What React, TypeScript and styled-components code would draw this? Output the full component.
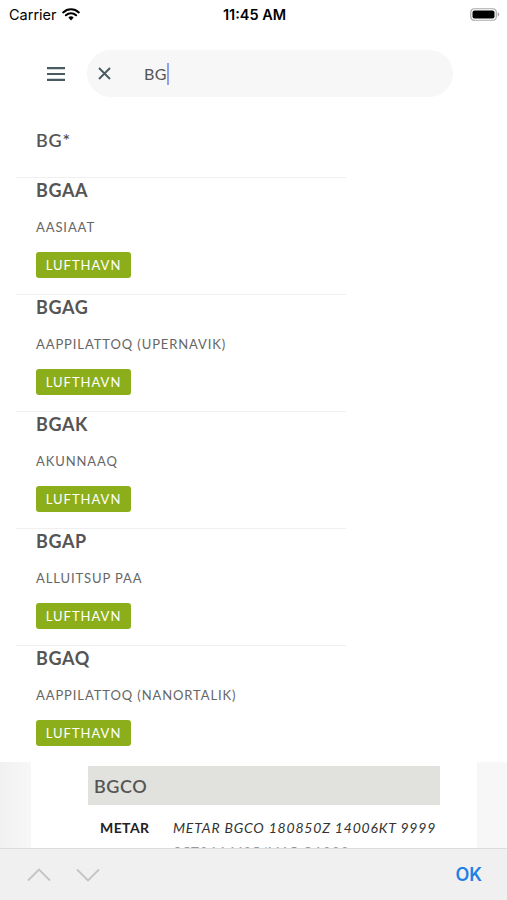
import React from "react";
import styled, { createGlobalStyle } from "styled-components";

const Global = createGlobalStyle`
  html, body { margin: 0; padding: 0; background: #fff; }
  body { font-family: Lato, "Open Sans", sans-serif; }
  * { box-sizing: border-box; }
`;

const Page = styled.div`
  width: 507px;
  height: 900px;
  overflow: hidden;
  display: flex;
  flex-direction: column;
  background: #fff;
`;

const StatusBar = styled.div`
  height: 28px;
  display: grid;
  grid-template-columns: 1fr auto 1fr;
  align-items: center;
  padding: 0 7px 0 9px;
  font-family: Inter, "Liberation Sans", sans-serif;
  color: #000;
`;

const Carrier = styled.div`
  display: flex;
  align-items: center;
  gap: 5px;
  font-size: 14.5px;
`;

const Time = styled.div`
  font-size: 14.5px;
  font-weight: 600;
`;

const BatteryWrap = styled.div`
  justify-self: end;
  display: flex;
  align-items: center;
`;

const Header = styled.div`
  height: 90px;
  display: flex;
  align-items: flex-start;
  padding: 22px 0 0 47px;
  gap: 22px;
`;

const MenuButton = styled.div`
  width: 18px;
  height: 47px;
  display: flex;
  align-items: center;
`;

const SearchPill = styled.div`
  width: 366px;
  height: 47px;
  border-radius: 24px;
  background: #f7f7f7;
  display: flex;
  align-items: center;
  padding-left: 11px;
`;

const SearchText = styled.div`
  margin-left: 33px;
  font-size: 16px;
  letter-spacing: 0.3px;
  color: #555;
  display: flex;
  align-items: center;
`;

const Caret = styled.span`
  display: inline-block;
  width: 2px;
  height: 22px;
  background: #8aa2f0;
`;

const List = styled.div`
  width: 330px;
  margin-left: 16px;
`;

const QueryRow = styled.div`
  height: 59px;
  padding: 10px 0 0 20px;
  font-size: 18px;
  line-height: 24px;
  font-weight: 600;
  letter-spacing: 0.8px;
  color: #555;
`;

const Item = styled.div`
  height: 117px;
  border-top: 1px solid #efefef;
  padding-left: 20px;
  display: flex;
  flex-direction: column;
  align-items: flex-start;
`;

const Code = styled.div`
  font-size: 18px;
  line-height: 24px;
  font-weight: 700;
  letter-spacing: 0.6px;
  color: #555;
`;

const Name = styled.div`
  margin-top: 15px;
  font-size: 13px;
  line-height: 20px;
  letter-spacing: 0.9px;
  color: #666;
`;

const Badge = styled.div`
  margin-top: 15px;
  height: 26px;
  width: 95px;
  border-radius: 3px;
  background: #8cae1a;
  color: #fff;
  font-size: 13px;
  display: flex;
  align-items: center;
  justify-content: center;
  letter-spacing: 1px;
`;

const Behind = styled.div`
  flex: 1;
  background: linear-gradient(90deg, #f1f1f1 0px, #f7f7f7 31px, #f7f7f7 100%);
  overflow: hidden;
  display: flex;
`;

const Card = styled.div`
  margin-left: 31px;
  width: 446px;
  background: #fff;
  padding: 4px 37px 0 57px;
`;

const Panel = styled.div`
  width: 352px;
  overflow: hidden;
`;

const PanelHeader = styled.div`
  height: 39px;
  background: #e1e1dd;
  display: flex;
  align-items: center;
  padding-left: 6px;
  font-size: 18px;
  font-weight: 600;
  letter-spacing: 0.6px;
  color: #555;
`;

const DataRow = styled.div`
  display: flex;
  padding: 13px 0 0 12px;
  white-space: nowrap;
`;

const DataLabel = styled.div`
  width: 73px;
  flex-shrink: 0;
  font-size: 14px;
  font-weight: 700;
  letter-spacing: 0.4px;
  line-height: 20px;
  color: #222;
`;

const DataValue = styled.div`
  font-size: 14px;
  font-style: italic;
  letter-spacing: 0.8px;
  color: #333;
  line-height: 20px;
`;

const ValueLine = styled.div<{ $faded?: boolean }>`
  margin-top: ${(p) => (p.$faded ? "4px" : "0")};
  color: ${(p) => (p.$faded ? "#999" : "inherit")};
`;

const Toolbar = styled.div`
  height: 52px;
  flex-shrink: 0;
  background: #f0f0f0;
  border-top: 1px solid #dcdcdc;
  display: flex;
  align-items: center;
  padding: 0 25px 0 27px;
`;

const Arrows = styled.div`
  display: flex;
  gap: 25px;
  flex: 1;
`;

const OkButton = styled.div`
  font-family: Inter, "Liberation Sans", sans-serif;
  font-size: 18px;
  font-weight: 600;
  color: #1f80e4;
`;

const items = [
  { code: "BGAA", name: "AASIAAT" },
  { code: "BGAG", name: "AAPPILATTOQ (UPERNAVIK)" },
  { code: "BGAK", name: "AKUNNAAQ" },
  { code: "BGAP", name: "ALLUITSUP PAA" },
  { code: "BGAQ", name: "AAPPILATTOQ (NANORTALIK)" },
];

export default function App() {
  return (
    <Page>
      <Global />
      <StatusBar>
        <Carrier>
          Carrier
          <svg width="18" height="13" viewBox="0 0 18 13">
            <path d="M9 12.5 L6.3 9.4 A4 4 0 0 1 11.7 9.4 Z" fill="#000" />
            <path d="M3.9 7.2 A7.5 7.5 0 0 1 14.1 7.2" stroke="#000" strokeWidth="2.1" fill="none" strokeLinecap="round" />
            <path d="M1.2 4.4 A11.3 11.3 0 0 1 16.8 4.4" stroke="#000" strokeWidth="2.1" fill="none" strokeLinecap="round" />
          </svg>
        </Carrier>
        <Time>11:45 AM</Time>
        <BatteryWrap>
          <svg width="30" height="13" viewBox="0 0 30 13">
            <rect x="0.75" y="0.75" width="25.5" height="11.5" rx="3.5" fill="none" stroke="#aaa" strokeWidth="1.2" />
            <rect x="2.5" y="2.5" width="22" height="8" rx="2" fill="#000" />
            <path d="M27.6 4.3 Q29.3 4.6 29.3 6.5 Q29.3 8.4 27.6 8.7 Z" fill="#aaa" />
          </svg>
        </BatteryWrap>
      </StatusBar>
      <Header>
        <MenuButton>
          <svg width="18" height="14" viewBox="0 0 18 14">
            <path d="M0 1.2h18M0 7h18M0 12.8h18" stroke="#485b60" strokeWidth="2.2" />
          </svg>
        </MenuButton>
        <SearchPill>
          <svg width="13" height="13" viewBox="0 0 13 13">
            <path d="M1 1l11 11M12 1L1 12" stroke="#485b60" strokeWidth="1.9" />
          </svg>
          <SearchText>
            BG
            <Caret />
          </SearchText>
        </SearchPill>
      </Header>
      <List>
        <QueryRow>BG*</QueryRow>
        {items.map((it) => (
          <Item key={it.code}>
            <Code>{it.code}</Code>
            <Name>{it.name}</Name>
            <Badge>LUFTHAVN</Badge>
          </Item>
        ))}
      </List>
      <Behind>
        <Card>
          <Panel>
            <PanelHeader>BGCO</PanelHeader>
            <DataRow>
              <DataLabel>METAR</DataLabel>
              <DataValue>
                <ValueLine>METAR BGCO 180850Z 14006KT 9999</ValueLine>
                <ValueLine $faded>SCT044 M05/M15 Q1022</ValueLine>
              </DataValue>
            </DataRow>
          </Panel>
        </Card>
      </Behind>
      <Toolbar>
        <Arrows>
          <svg width="24" height="14" viewBox="0 0 24 14">
            <path d="M1 12.5L12 1.5L23 12.5" stroke="#c4c4c4" strokeWidth="1.8" fill="none" />
          </svg>
          <svg width="24" height="14" viewBox="0 0 24 14">
            <path d="M1 1.5L12 12.5L23 1.5" stroke="#c4c4c4" strokeWidth="1.8" fill="none" />
          </svg>
        </Arrows>
        <OkButton>OK</OkButton>
      </Toolbar>
    </Page>
  );
}
